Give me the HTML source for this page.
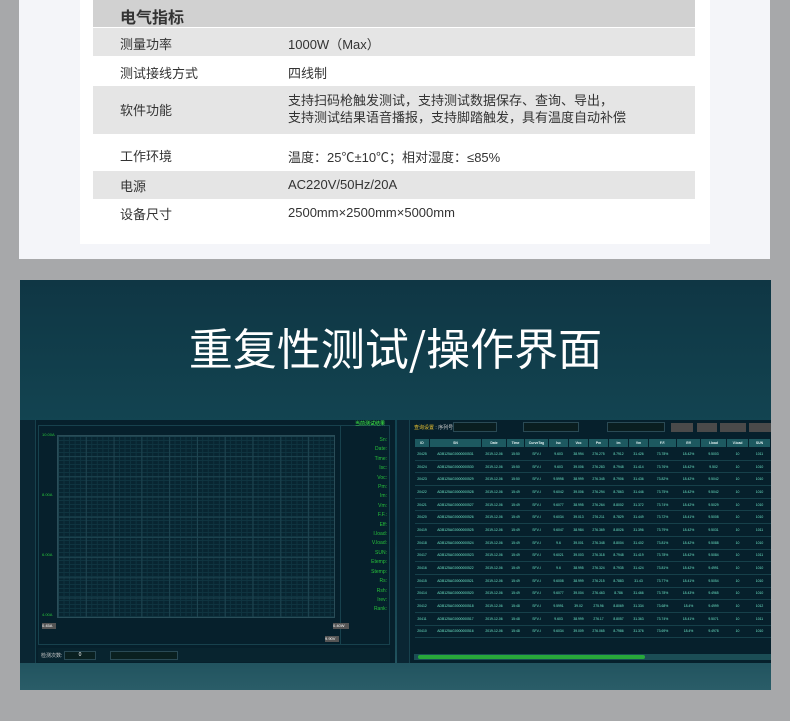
<!DOCTYPE html>
<html><head><meta charset="utf-8"><style>
*{margin:0;padding:0;box-sizing:border-box}
body{width:790px;height:721px;background:#a7a8aa;font-family:"Liberation Sans","Noto Sans CJK SC",sans-serif;position:relative;overflow:hidden}
.panel{position:absolute;left:19px;top:0;width:751px;height:259px;background:#f4f5f9}
.card{position:absolute;left:80px;top:0;width:630px;height:244px;background:#fff}
.row{position:absolute;left:93px;width:602px;font-size:13px;color:#333}
.row span{position:absolute}
.l{left:27px}.v{left:195px}
.g{background:#e5e5e5}
.dark{position:absolute;left:20px;top:280px;width:751px;height:410px;background:linear-gradient(180deg,#0f3644 0%,#134653 40%,#0f3a48 60%,#1d4e5a 90%,#2a5d68 100%);overflow:hidden}
.title{position:absolute;left:0;width:751px;top:34px;text-align:center;color:#fff;font-size:44px;letter-spacing:0px;font-family:"Noto Sans CJK SC",sans-serif}
.lp{position:absolute;left:0;top:140px;width:375px;height:243px;background:#06202c}
.rp{position:absolute;left:377px;top:140px;width:374px;height:243px;background:#06202c}
.side{position:absolute;left:0;top:0;width:16px;height:100%;background:#0a2633;border-right:1px solid #17414d}
.plot{position:absolute;left:37px;top:15px;width:278px;height:183px;border:1px solid #2a4d58;
background-image:linear-gradient(#1e4450 1px,transparent 1px),linear-gradient(90deg,#1e4450 1px,transparent 1px),linear-gradient(#0f3440 1px,transparent 1px),linear-gradient(90deg,#0f3440 1px,transparent 1px);
background-size:100% 20.2px,27.8px 100%,100% 4px,5.56px 100%;background-color:#082531}
.gt{position:absolute;font-size:4px;color:#27c33a}
.rl{position:absolute;right:8px;font-size:5px;color:#27c33a;text-align:right}
table{position:absolute;left:17px;top:18px;width:356px;table-layout:fixed;border-collapse:collapse;font-size:3.4px;color:#6fe8c8;white-space:nowrap}
th{background:#1d5960;color:#e0f0f0;height:9px;border:1px solid #06202c;font-weight:bold;overflow:hidden}
td{height:12.7px;border-bottom:1px solid #16404a;text-align:center;overflow:hidden}
</style></head><body>
<div class="panel"></div>
<div class="card"></div>
<div class="row" style="top:0;height:27px;background:#d1d1d1"><span class="l" style="top:4px;font-size:16px;font-weight:bold;color:#333">电气指标</span></div>
<div class="row g" style="top:28px;height:28px"><span class="l" style="top:6px">测量功率</span><span class="v" style="top:6px">1000W（Max）</span></div>
<div class="row" style="top:57px;height:28px"><span class="l" style="top:6px">测试接线方式</span><span class="v" style="top:6px">四线制</span></div>
<div class="row g" style="top:86px;height:48px"><span class="l" style="top:14px">软件功能</span><span class="v" style="top:6px;line-height:17px">支持扫码枪触发测试，支持测试数据保存、查询、导出，<br>支持测试结果语音播报，支持脚踏触发，具有温度自动补偿</span></div>
<div class="row" style="top:135px;height:35px"><span class="l" style="top:11px">工作环境</span><span class="v" style="top:12px">温度：25℃±10℃；相对湿度：≤85%</span></div>
<div class="row g" style="top:171px;height:28px"><span class="l" style="top:5px">电源</span><span class="v" style="top:6px">AC220V/50Hz/20A</span></div>
<div class="row" style="top:200px;height:28px"><span class="l" style="top:4px">设备尺寸</span><span class="v" style="top:5px">2500mm×2500mm×5000mm</span></div>

<div class="dark">
<div class="title">重复性测试/操作界面</div>
<div class="lp">
 <div class="side"></div>
 <div style="position:absolute;left:18px;top:5px;width:352px;height:220px;border:1px solid #17414d"></div>
 <div class="plot"></div>
 <div style="position:absolute;left:320px;top:5px;width:1px;height:220px;background:#17414d"></div>
 <div class="gt" style="left:22px;top:12px">10.00A</div>
 <div class="gt" style="left:22px;top:72px">8.00A</div>
 <div class="gt" style="left:22px;top:132px">6.00A</div>
 <div class="gt" style="left:22px;top:192px">4.00A</div>
 <div style="position:absolute;left:22px;top:203px;width:14px;height:6px;background:#555;font-size:4px;color:#fff">0.45A</div>
 <div style="position:absolute;left:313px;top:203px;width:16px;height:6px;background:#555;font-size:4px;color:#fff">0.40W</div>
 <div style="position:absolute;left:305px;top:216px;width:14px;height:6px;background:#555;font-size:4px;color:#fff">9.90V</div>
 <div class="gt" style="left:335px;top:0px;font-size:5px;color:#4f4">当前测试结果</div>
 <div class="rl" style="top:16px;line-height:9.4px">Sn:<br>Date:<br>Time:<br>Isc:<br>Voc:<br>Pm:<br>Im:<br>Vm:<br>F.F.:<br>Eff:<br>I.load:<br>V.load:<br>SUN:<br>Etemp:<br>Stemp:<br>Rs:<br>Rsh:<br>Irev:<br>Rank:</div>
 <div style="position:absolute;left:18px;top:228px;width:352px;height:14px;background:#08242f;font-size:5px;color:#ccc;padding:4px 3px">检测次数:</div>
 <div style="position:absolute;left:44px;top:231px;width:32px;height:9px;border:1px solid #2a4a55;background:#0a2020;font-size:5px;color:#fff;text-align:center">0</div>
 <div style="position:absolute;left:90px;top:231px;width:68px;height:9px;border:1px solid #2a4a55;background:#0a2020"></div>
</div>
<div class="rp">
 <div class="side" style="width:13px"></div>
 <div style="position:absolute;left:17px;top:4px;font-size:5px;color:#e8c030">查询设置 <span style="color:#ccc">: 序列号:</span></div>
 <div style="position:absolute;left:56px;top:2px;width:44px;height:10px;border:1px solid #2a4a55;background:#0a1e20"></div>
 <div style="position:absolute;left:126px;top:2px;width:56px;height:10px;border:1px solid #2a4a55;background:#0a1e20"></div>
 <div style="position:absolute;left:210px;top:2px;width:58px;height:10px;border:1px solid #2a4a55;background:#0a1e20"></div>
 <div style="position:absolute;left:274px;top:3px;width:22px;height:9px;background:#4a4a4a"></div>
 <div style="position:absolute;left:300px;top:3px;width:20px;height:9px;background:#4a4a4a"></div>
 <div style="position:absolute;left:323px;top:3px;width:26px;height:9px;background:#4a4a4a"></div>
 <div style="position:absolute;left:352px;top:3px;width:22px;height:9px;background:#4a4a4a"></div>
 <table>
 <colgroup><col style="width:15px"><col style="width:52px"><col style="width:25px"><col style="width:18px"><col style="width:24px"><col style="width:20px"><col style="width:20px"><col style="width:20px"><col style="width:20px"><col style="width:20px"><col style="width:28px"><col style="width:24px"><col style="width:26px"><col style="width:22px"><col style="width:22px"></colgroup>
 <tr><th>ID</th><th>SN</th><th>Date</th><th>Time</th><th>CurveTag</th><th>Isc</th><th>Voc</th><th>Pm</th><th>Im</th><th>Vm</th><th>F.F.</th><th>Eff</th><th>I.load</th><th>V.load</th><th>SUN</th></tr>
 <tr><td>20425</td><td>ADB125AG0000000531</td><td>2019-12-06</td><td>15:50</td><td>SFV-I</td><td>9.603</td><td>38.994</td><td>276.275</td><td>8.7912</td><td>31.426</td><td>73.78%</td><td>18.42%</td><td>9.5003</td><td>10</td><td>1011</td></tr>
 <tr><td>20424</td><td>ADB125AG0000000530</td><td>2019-12-06</td><td>15:50</td><td>SFV-I</td><td>9.603</td><td>39.006</td><td>276.283</td><td>8.7948</td><td>31.414</td><td>73.76%</td><td>18.42%</td><td>9.502</td><td>10</td><td>1010</td></tr>
 <tr><td>20423</td><td>ADB125AG0000000529</td><td>2019-12-06</td><td>15:50</td><td>SFV-I</td><td>9.5998</td><td>38.999</td><td>276.345</td><td>8.7906</td><td>31.436</td><td>73.82%</td><td>18.42%</td><td>9.5042</td><td>10</td><td>1010</td></tr>
 <tr><td>20422</td><td>ADB125AG0000000528</td><td>2019-12-06</td><td>15:49</td><td>SFV-I</td><td>9.6042</td><td>39.006</td><td>276.294</td><td>8.7863</td><td>31.446</td><td>73.75%</td><td>18.42%</td><td>9.5042</td><td>10</td><td>1010</td></tr>
 <tr><td>20421</td><td>ADB125AG0000000527</td><td>2019-12-06</td><td>15:49</td><td>SFV-I</td><td>9.6077</td><td>38.995</td><td>276.264</td><td>8.8002</td><td>31.372</td><td>73.74%</td><td>18.42%</td><td>9.5029</td><td>10</td><td>1010</td></tr>
 <tr><td>20420</td><td>ADB125AG0000000526</td><td>2019-12-06</td><td>15:49</td><td>SFV-I</td><td>9.6034</td><td>39.013</td><td>276.211</td><td>8.7829</td><td>31.449</td><td>73.72%</td><td>18.41%</td><td>9.5008</td><td>10</td><td>1010</td></tr>
 <tr><td>20419</td><td>ADB125AG0000000525</td><td>2019-12-06</td><td>15:49</td><td>SFV-I</td><td>9.6047</td><td>38.984</td><td>276.369</td><td>8.8026</td><td>31.396</td><td>73.79%</td><td>18.42%</td><td>9.5031</td><td>10</td><td>1011</td></tr>
 <tr><td>20418</td><td>ADB125AG0000000524</td><td>2019-12-06</td><td>15:49</td><td>SFV-I</td><td>9.6</td><td>39.001</td><td>276.348</td><td>8.8004</td><td>31.402</td><td>73.81%</td><td>18.42%</td><td>9.5088</td><td>10</td><td>1010</td></tr>
 <tr><td>20417</td><td>ADB125AG0000000523</td><td>2019-12-06</td><td>15:49</td><td>SFV-I</td><td>9.6021</td><td>39.003</td><td>276.318</td><td>8.7948</td><td>31.419</td><td>73.78%</td><td>18.42%</td><td>9.5084</td><td>10</td><td>1011</td></tr>
 <tr><td>20416</td><td>ADB125AG0000000522</td><td>2019-12-06</td><td>15:49</td><td>SFV-I</td><td>9.6</td><td>38.995</td><td>276.324</td><td>8.7935</td><td>31.424</td><td>73.81%</td><td>18.42%</td><td>9.4991</td><td>10</td><td>1010</td></tr>
 <tr><td>20415</td><td>ADB125AG0000000521</td><td>2019-12-06</td><td>15:49</td><td>SFV-I</td><td>9.6008</td><td>38.999</td><td>276.215</td><td>8.7883</td><td>31.43</td><td>73.77%</td><td>18.41%</td><td>9.5054</td><td>10</td><td>1010</td></tr>
 <tr><td>20414</td><td>ADB125AG0000000520</td><td>2019-12-06</td><td>15:49</td><td>SFV-I</td><td>9.6077</td><td>39.004</td><td>276.463</td><td>8.786</td><td>31.466</td><td>73.78%</td><td>18.43%</td><td>9.4965</td><td>10</td><td>1010</td></tr>
 <tr><td>20412</td><td>ADB125AG0000000518</td><td>2019-12-06</td><td>15:48</td><td>SFV-I</td><td>9.5991</td><td>39.02</td><td>275.96</td><td>8.8069</td><td>31.334</td><td>73.68%</td><td>18.4%</td><td>9.4999</td><td>10</td><td>1012</td></tr>
 <tr><td>20411</td><td>ADB125AG0000000517</td><td>2019-12-06</td><td>15:48</td><td>SFV-I</td><td>9.603</td><td>38.999</td><td>276.17</td><td>8.8057</td><td>31.363</td><td>73.74%</td><td>18.41%</td><td>9.5071</td><td>10</td><td>1011</td></tr>
 <tr><td>20410</td><td>ADB125AG0000000516</td><td>2019-12-06</td><td>15:48</td><td>SFV-I</td><td>9.6034</td><td>39.009</td><td>276.065</td><td>8.7986</td><td>31.376</td><td>73.69%</td><td>18.4%</td><td>9.4978</td><td>10</td><td>1010</td></tr>
 </table>
 <div style="position:absolute;left:17px;top:234px;width:357px;height:6px;background:#1b4d55"></div>
 <div style="position:absolute;left:21px;top:235px;width:227px;height:4px;background:#27a83a;border-radius:2px"></div>
</div>
</div>
</body></html>
